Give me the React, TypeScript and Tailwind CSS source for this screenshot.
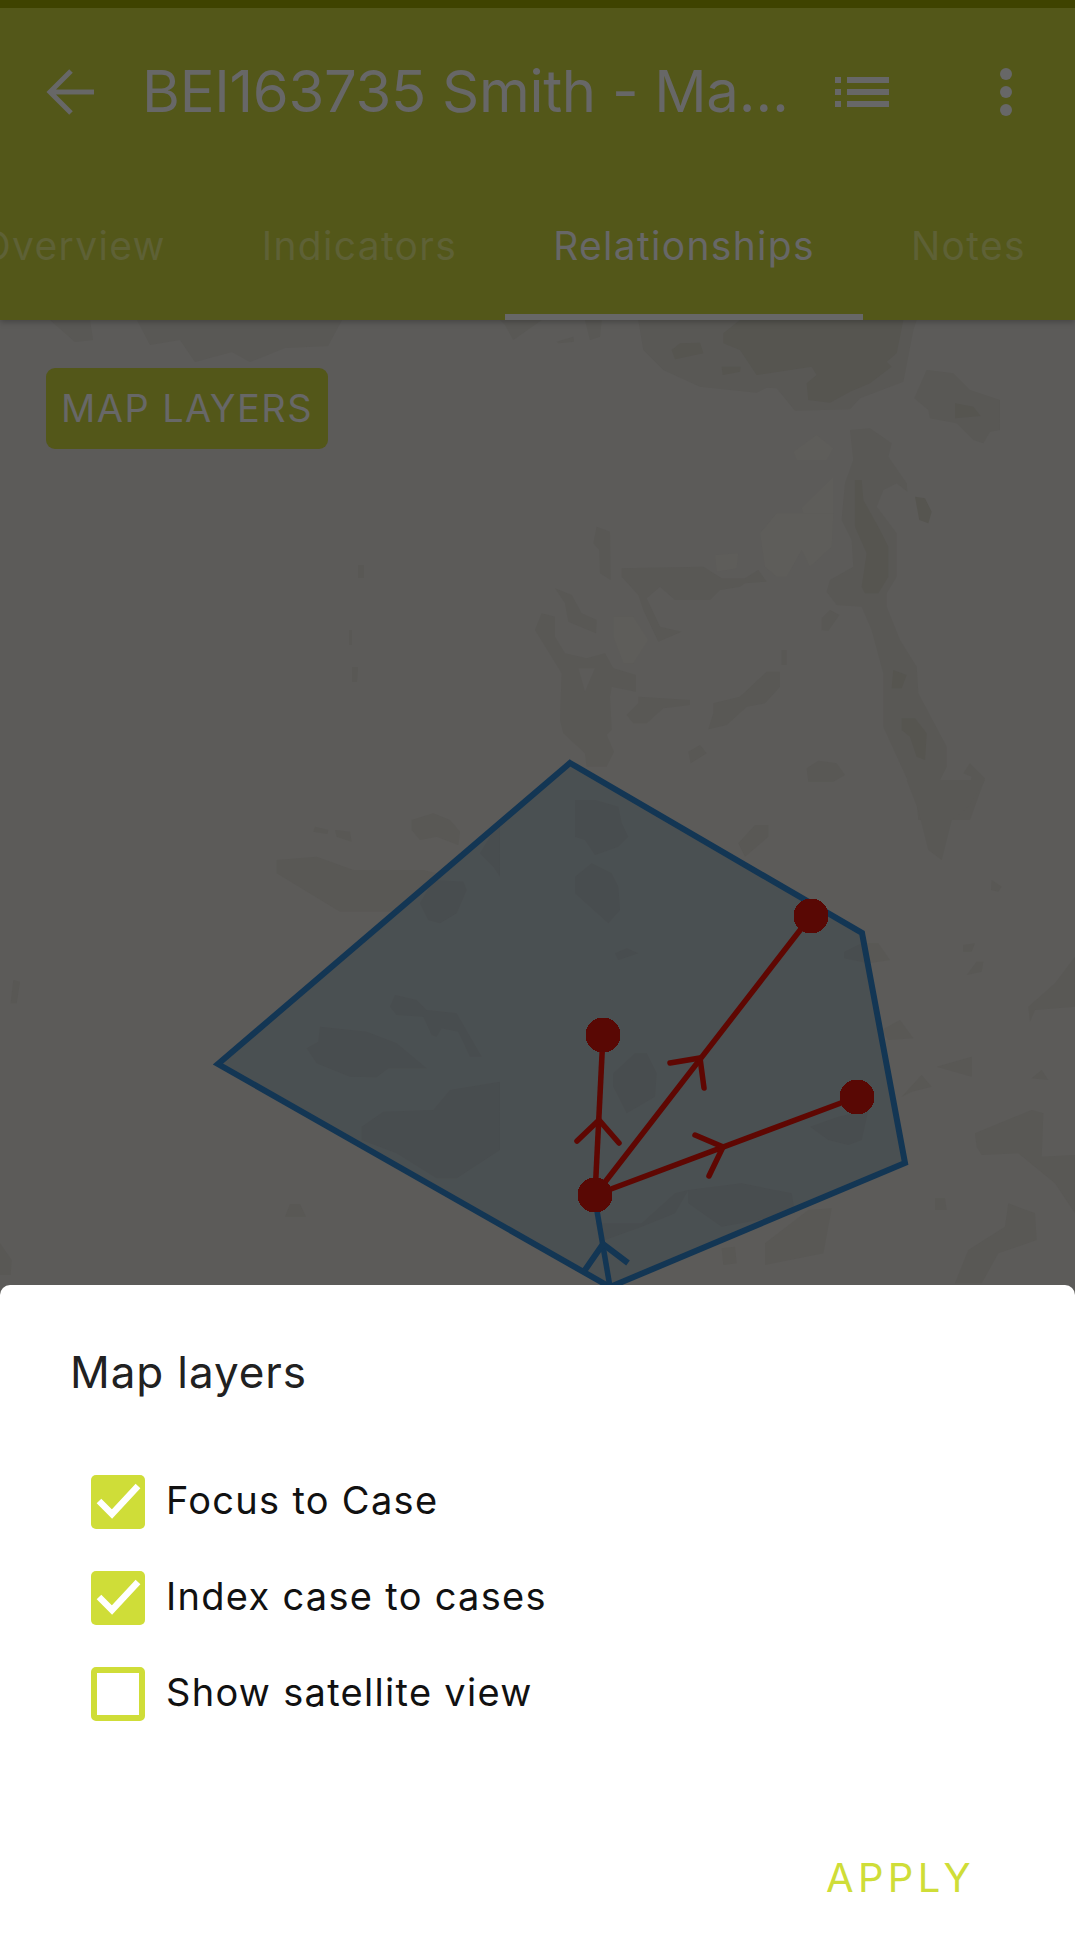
const MAP_TOP = [
  "M415,0 L430,90 L490,150 L600,200 L770,218 L800,203 L830,205 L885,272 L1050,268 L1080,235 L1210,185 L1240,30 L1250,0 Z",
  "M1280,150 L1360,160 L1410,210 L1500,240 L1500,330 L1470,335 L1450,370 L1420,360 L1370,310 L1290,295 L1285,270 L1243,235 Z",
  "M1050,330 L1110,325 L1175,370 L1165,410 L1220,490 L1222,515 L1190,490 L1150,510 L1130,560 L1190,640 L1190,770 L1160,820 L1160,860 L1200,960 L1250,1040 L1255,1120 L1340,1280 L1340,1340 L1310,1400 L1330,1450 L1400,1450 L1415,1370 L1390,1360 L1410,1330 L1455,1375 L1410,1500 L1255,1500 L1250,1440 L1150,1220 L1150,1060 L1115,930 L1085,860 L1010,855 L980,815 L990,780 L1060,740 L1055,660 L1025,600 L1035,490 L1060,420 Z",
  "M920,1345 L955,1322 L1010,1330 L1035,1365 L1000,1385 L925,1385 Z",
  "M965,895 L990,870 L1018,885 L985,932 L965,930 Z",
  "M845,990 L860,990 L860,1035 L845,1035 Z",
  "M640,1150 L720,1130 L800,1055 L840,1055 L840,1100 L795,1150 L740,1160 L680,1215 L625,1228 L640,1180 Z",
  "M565,1295 L600,1275 L620,1300 L572,1330 Z",
  "M365,745 L610,740 L665,775 L735,775 L775,750 L800,785 L735,790 L720,800 L660,810 L630,840 L525,840 L480,800 L440,835 L480,920 L545,935 L475,965 L430,870 L415,825 L365,770 Z",
  "M290,620 L330,635 L332,780 L300,760 L298,690 L280,670 Z",
  "M165,805 L215,825 L245,880 L290,900 L288,940 L205,905 L195,850 Z",
  "M125,880 L165,890 L165,950 L195,1000 L260,1015 L315,1000 L340,1045 L408,1065 L408,1115 L335,1100 L330,1130 L335,1230 L320,1245 L342,1295 L320,1340 L260,1340 L255,1300 L190,1240 L180,1200 L185,1060 L105,930 Z M235,1045 L285,1045 L255,1115 Z",
  "M415,1130 L570,1140 L570,1155 L490,1165 L440,1210 L400,1210 L380,1185 L415,1150 Z",
  "M0,0 L125,0 L40,60 L15,15 Z",
  "M255,0 L305,0 L300,50 L270,60 Z",
  "M170,65 L220,50 L222,65 L175,70 Z",
];

const MAP_TOP_DARK = [
  "M670,40 L720,0 L1210,0 L1190,100 L1160,125 L1175,140 L1110,190 L1050,215 L990,248 L925,240 L920,190 L950,165 L935,140 L770,165 L720,90 L670,70 Z",
  "M515,90 L540,70 L600,68 L610,100 L525,118 Z",
  "M665,140 L722,140 L720,155 L668,165 Z",
  "M1365,250 L1420,260 L1442,288 L1365,295 Z",
  "M1065,480 L1085,480 L1090,540 L1140,630 L1165,680 L1165,770 L1135,820 L1095,820 L1085,800 L1100,700 L1065,620 Z",
  "M1205,1195 L1245,1195 L1280,1240 L1275,1320 L1250,1310 L1230,1250 L1205,1230 Z",
  "M1180,1050 L1220,1065 L1205,1105 L1175,1105 Z",
  "M1245,530 L1275,535 L1295,575 L1285,610 L1258,600 Z",
];

const MAP_TOP_LIGHT = [
  "M880,395 L950,345 L1000,385 L980,420 L890,420 Z",
  "M905,565 L1000,470 L1000,580 L910,580 Z",
  "M780,640 L830,580 L1000,580 L995,680 L930,740 L905,690 L860,770 L830,770 L795,740 Z",
  "M645,705 L715,700 L710,745 L650,755 Z",
  "M340,890 L400,890 L445,960 L400,1030 L370,1030 L340,950 Z",
];

const MAP_LEFT = [
  "M830,240 L950,230 L1060,270 L1270,270 L1310,280 L1200,395 L1020,395 L830,280 Z",
  "M1235,120 L1300,100 L1350,120 L1380,155 L1375,195 L1310,170 L1260,180 L1235,150 Z",
  "M945,140 L985,150 L982,162 L940,155 Z",
  "M1005,150 L1050,155 L1055,185 L1010,170 Z",
  "M40,600 L60,605 L50,670 L32,670 Z",
  "M870,1272 L900,1272 L918,1310 L855,1310 Z",
  "M0,1390 L35,1440 L32,1485 L0,1485 Z",
  "M960,740 L1100,755 L1190,790 L1280,865 L1165,865 L1130,892 L1050,890 L950,850 L920,805 L955,785 Z",
  "M1185,645 L1250,660 L1280,690 L1370,700 L1445,830 L1410,830 L1375,755 L1325,745 L1310,770 L1295,765 L1270,710 L1190,705 L1170,680 Z",
  "M1085,1040 L1150,995 L1300,990 L1350,930 L1500,905 L1500,1110 L1370,1195 L1310,1195 L1190,1120 L1085,1080 Z",
  "M1440,220 L1470,170 L1500,120 L1500,290 L1480,260 Z",
  "M1260,370 L1300,300 L1390,305 L1400,330 L1370,400 L1320,430 L1285,420 Z",
];

const MAP_RIGHT = [
  "M0,60 L60,60 L130,80 L140,130 L160,170 L130,200 L60,225 L30,180 L0,170 Z",
  "M0,290 L50,250 L110,280 L130,320 L135,390 L100,430 L0,340 Z",
  "M120,520 L155,505 L190,520 L130,540 Z",
  "M115,880 L180,820 L215,820 L245,880 L240,950 L155,1000 L115,920 Z",
  "M705,1040 L790,1010 L880,990 L860,1080 L820,1095 L760,1080 Z",
  "M808,515 L860,490 L910,490 L945,540 L880,550 L808,535 Z",
  "M340,1230 L500,1210 L650,1240 L660,1300 L440,1340 L340,1270 Z",
  "M60,1330 L200,1330 L300,1240 L340,1230 L300,1300 L200,1340 L90,1380 Z",
  "M995,0 L1230,0 L1180,80 L1130,120 L1100,240 L1060,210 L1030,90 Z",
  "M490,190 L540,135 L580,135 L580,170 L510,230 Z",
  "M1250,300 L1280,320 L1270,335 L1248,330 Z",
  "M1165,495 L1200,490 L1190,515 L1165,515 Z",
  "M1175,585 L1205,545 L1225,545 L1220,575 Z",
  "M1360,680 L1440,610 L1500,530 L1500,680 L1380,690 L1365,725 Z",
  "M920,750 L975,720 L1015,775 L940,780 Z",
  "M1085,860 L1190,830 L1190,890 Z",
  "M1370,895 L1400,870 L1420,900 Z",
  "M980,950 L1040,885 L1070,920 L1010,935 Z",
  "M1200,1060 L1370,990 L1405,1000 L1400,1130 L1500,1125 L1500,1300 L1440,1210 L1330,1120 L1220,1125 L1205,1100 Z",
  "M1080,1255 L1110,1255 L1115,1290 L1080,1290 Z",
  "M440,1405 L480,1400 L485,1450 L445,1455 Z",
  "M570,1390 L700,1290 L770,1285 L745,1420 L570,1455 Z",
  "M1140,1510 L1180,1410 L1290,1340 L1300,1270 L1380,1300 L1385,1380 L1270,1420 L1220,1510 Z",
];

const EDGES = [
  { from: [595, 1195], to: [811, 916], arrow: "670,1063 700,1058 704,1088" },
  { from: [595, 1195], to: [603, 1035], arrow: "577,1141 599,1120 619,1143" },
  { from: [595, 1195], to: [857, 1097], arrow: "695,1135 723,1147 709,1176" },
];

const NODES = [
  [811, 916],
  [603, 1035],
  [857, 1097],
  [595, 1195],
];

const TABS = ["Overview", "Indicators", "Relationships", "Notes"];

const LAYERS = [
  { label: "Focus to Case", checked: true },
  { label: "Index case to cases", checked: true },
  { label: "Show satellite view", checked: false },
];

function MapDrawing() {
  return (
    <svg className="absolute inset-0 h-full w-full" viewBox="0 320 1075 1621">
      <path fill="#595855" d="M137,320 L342,320 L328,346 L285,348 L250,362 L232,352 L195,362 L180,340 L150,345 Z M50,320 L90,320 L93,340 L75,342 Z M358,565 L364,565 L364,578 L358,578 Z M349,630 L352,630 L352,645 L349,645 Z M352,667 L358,667 L357,682 L352,682 Z" />
      <g transform="translate(500 320) scale(0.33333)">
        {MAP_TOP_LIGHT.map((d) => (
          <path key={d} d={d} fill="#5e5d5a" />
        ))}
        {MAP_TOP.map((d) => (
          <path key={d} d={d} fill="#595855" fillRule="evenodd" />
        ))}
        {MAP_TOP_DARK.map((d) => (
          <path key={d} d={d} fill="#565550" />
        ))}
      </g>
      <g transform="translate(0 780) scale(0.33333)" fill="#595855">
        {MAP_LEFT.map((d) => (
          <path key={d} d={d} />
        ))}
      </g>
      <g transform="translate(575 780) scale(0.33333)" fill="#595855">
        {MAP_RIGHT.map((d) => (
          <path key={d} d={d} />
        ))}
      </g>

      {/* case area */}
      <polygon
        points="570,763 862,933 905,1163 610,1287 218,1064"
        fill="#0c2a3c"
        fillOpacity="0.22"
        stroke="#133654"
        strokeWidth="6"
        strokeLinejoin="miter"
      />
      <line x1="597" y1="1211" x2="610" y2="1287" stroke="#133654" strokeWidth="5.5" />
      <polyline
        points="585,1270 603,1244 628,1263"
        fill="none"
        stroke="#133654"
        strokeWidth="6"
      />

      {EDGES.map((e) => (
        <g key={e.arrow} stroke="#5f0702" fill="none" strokeWidth="5.5" strokeLinecap="round">
          <line x1={e.from[0]} y1={e.from[1]} x2={e.to[0]} y2={e.to[1]} />
          <polyline points={e.arrow} />
        </g>
      ))}
      {NODES.map(([x, y]) => (
        <circle key={x} cx={x} cy={y} r="17.5" fill="#590804" shapeRendering="crispEdges" />
      ))}
    </svg>
  );
}

function Checkbox({ checked }: { checked: boolean }) {
  return (
    <div
      className={
        checked
          ? "h-[54px] w-[54px] shrink-0 rounded-[5px] bg-[#cfdd38]"
          : "h-[54px] w-[54px] shrink-0 rounded-[5px] border-[6px] border-[#cfdd38] bg-white"
      }
    >
      {checked && (
        <svg viewBox="0 0 54 54" className="h-full w-full">
          <polyline points="8,26 21,39 47,11" fill="none" stroke="#ffffff" strokeWidth="6.5" />
        </svg>
      )}
    </div>
  );
}

export default function App() {
  return (
    <div className="relative flex h-[1941px] w-[1075px] flex-col overflow-hidden bg-[#5c5b59] font-['Inter',sans-serif]">
      {/* Header */}
      <header className="relative z-10 shrink-0 bg-[#535719] shadow-[0_2px_6px_rgba(0,0,0,0.25)]">
        <div className="h-2 bg-[#3f4300]" />
        <div className="flex h-[168px] items-center">
          <svg className="ml-[44px] h-[48px] w-[54px] shrink-0" viewBox="0 0 54 48">
            <path d="M50 24 H6 M27 3 L6 24 L27 45" fill="none" stroke="#676767" strokeWidth="5" />
          </svg>
          <h1 className="ml-[44px] w-[687px] truncate pb-[2px] text-[58px] font-normal tracking-[-0.3px] text-[#676767]">
            BEI163735 Smith - Ma…
          </h1>
          <svg className="ml-[6px] h-[30px] w-[54px] shrink-0" viewBox="0 0 54 30" fill="#676767">
            <rect x="0" y="0" width="6" height="6" />
            <rect x="12" y="0" width="42" height="6" />
            <rect x="0" y="12" width="6" height="6" />
            <rect x="12" y="12" width="42" height="6" />
            <rect x="0" y="24" width="6" height="6" />
            <rect x="12" y="24" width="42" height="6" />
          </svg>
          <svg className="ml-[111px] h-[48px] w-[12px] shrink-0" viewBox="0 0 12 48" fill="#676767">
            <circle cx="6" cy="6" r="6" />
            <circle cx="6" cy="24" r="6" />
            <circle cx="6" cy="42" r="6" />
          </svg>
        </div>
        <div className="ml-[-67px] flex h-[144px] w-max">
          {TABS.map((tab) => (
            <div
              key={tab}
              className={
                tab === "Relationships"
                  ? "flex items-center border-b-[6px] border-[#676767] px-[48px] pt-[3px] text-[39px] tracking-[1.3px] text-[#676767]"
                  : "flex items-center border-b-[6px] border-transparent px-[48px] pt-[3px] text-[39px] tracking-[1.3px] text-[#5e6136]"
              }
            >
              {tab}
            </div>
          ))}
        </div>
      </header>

      {/* Map */}
      <main className="relative min-h-0 flex-1">
        <MapDrawing />
        <button className="relative ml-[46px] mt-[48px] flex h-[81px] w-[282px] items-center justify-center rounded-[9px] bg-[#535719] text-[38px] tracking-[1.4px] text-[#676767]">
          MAP LAYERS
        </button>
      </main>

      {/* Bottom sheet */}
      <section className="absolute inset-x-0 bottom-0 z-20 flex h-[656px] flex-col rounded-t-[10px] bg-white">
        <h2 className="ml-[70px] mt-[61px] text-[44px] leading-[52px] font-normal tracking-[0.9px] text-[#212121]">Map layers</h2>
        <div className="ml-[91px] mt-[77px] flex flex-col gap-[42px]">
          {LAYERS.map((layer) => (
            <label key={layer.label} className="flex items-center gap-[21px] text-[38px] tracking-[1.3px] text-[#111111]">
              <Checkbox checked={layer.checked} />
              <span className="-mt-1">{layer.label}</span>
            </label>
          ))}
        </div>
        <button className="mr-[100px] mt-auto mb-[43px] self-end text-[40px] leading-[40px] tracking-[4.4px] text-[#cfdd38]">
          APPLY
        </button>
      </section>
    </div>
  );
}
